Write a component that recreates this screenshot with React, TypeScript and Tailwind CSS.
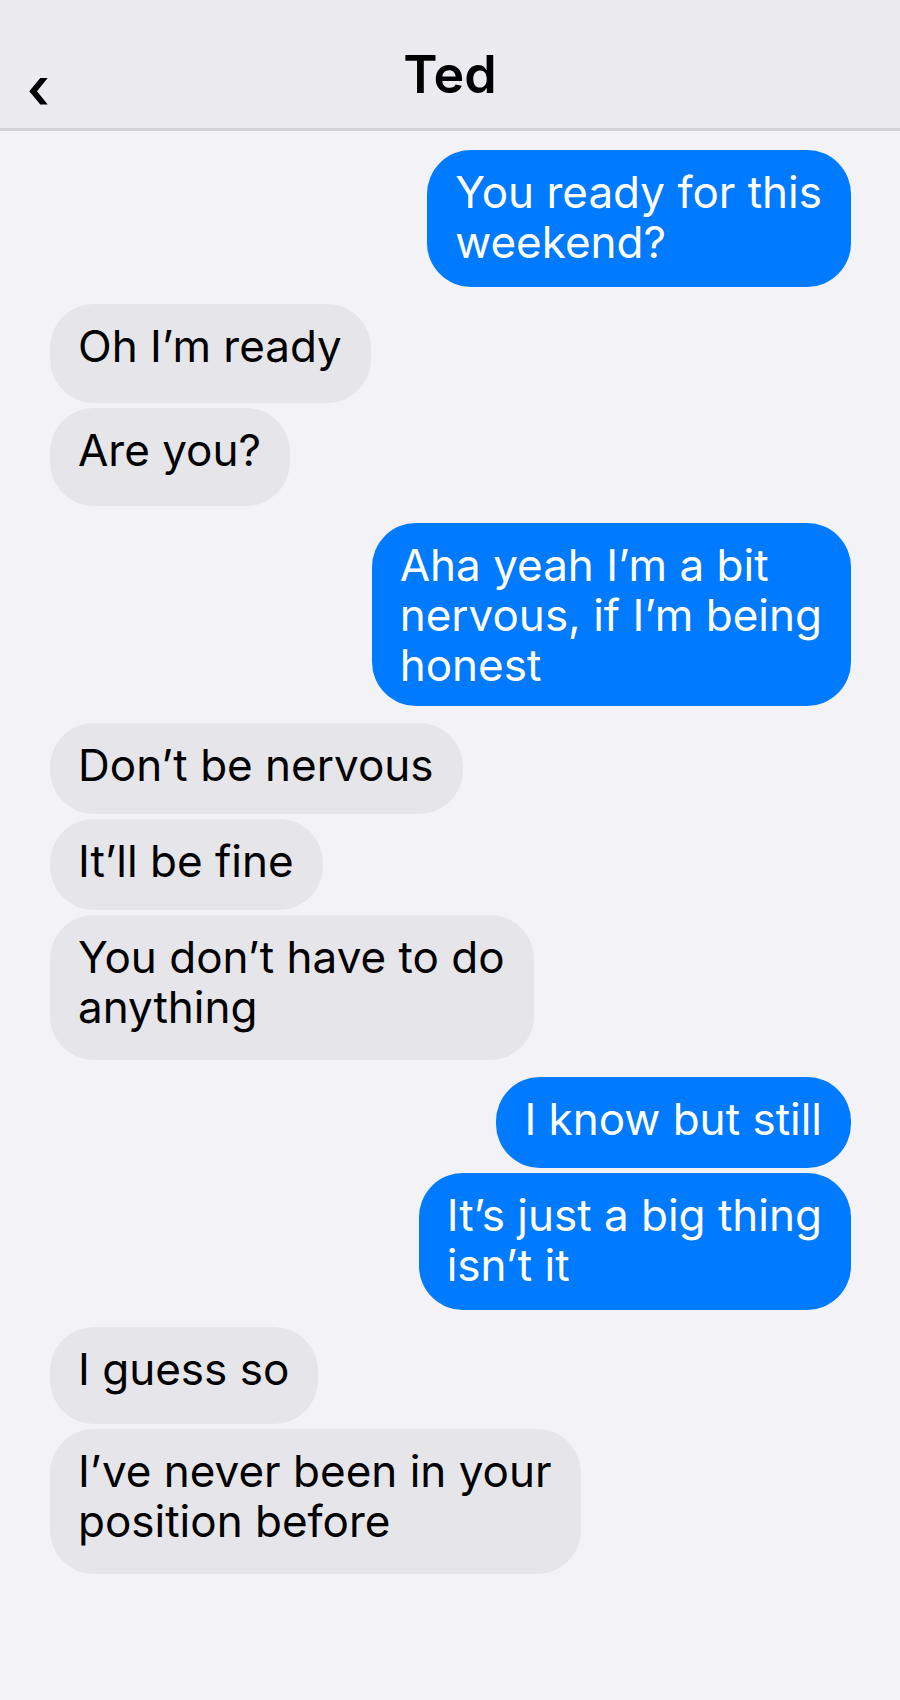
type Message = { from: 'me' | 'them'; text: string; size: string };

const groups: Message[][] = [
  [{ from: 'me', text: 'You ready for this\nweekend?', size: 'pb-5' }],
  [
    { from: 'them', text: 'Oh I’m ready', size: 'pb-8' },
    { from: 'them', text: 'Are you?', size: 'pb-[31px]' },
  ],
  [{ from: 'me', text: 'Aha yeah I’m a bit\nnervous, if I’m being\nhonest', size: 'pb-4' }],
  [
    { from: 'them', text: 'Don’t be nervous', size: 'pb-6' },
    { from: 'them', text: 'It’ll be fine', size: 'pb-6' },
    { from: 'them', text: 'You don’t have to do\nanything', size: 'pb-7' },
  ],
  [
    { from: 'me', text: 'I know but still', size: 'pb-6' },
    { from: 'me', text: 'It’s just a big thing\nisn’t it', size: 'pb-5' },
  ],
  [
    { from: 'them', text: 'I guess so', size: 'pb-[30px]' },
    { from: 'them', text: 'I’ve never been in your\nposition before', size: 'pb-7' },
  ],
];

function Bubble({ message }: { message: Message }) {
  const look =
    message.from === 'me' ? 'self-end bg-[#007aff] text-white' : 'self-start bg-[#e5e5ea] text-black';
  return (
    <li
      className={`whitespace-pre-line rounded-[44px] pt-[17px] pr-[29px] pl-7 text-[44px] leading-[50px] ${look} ${message.size}`}
    >
      {message.text}
    </li>
  );
}

export default function App() {
  return (
    <div className="flex min-h-screen flex-col bg-[#f2f2f7] font-['Inter',sans-serif]">
      <header className="grid grid-cols-[1fr_auto_1fr] items-end border-b-[3px] border-[#d1d1d6] bg-[#ebebf0] px-7 pt-[45px] pb-[23px]">
        <button type="button" aria-label="Back" className="justify-self-start">
          <svg width="20" height="28" viewBox="0 0 20 28" className="block">
            <path d="M12.3 1H19.7L9 14.3 19.7 27.5H12.3L1.3 14.3Z" fill="black" />
          </svg>
        </button>
        <h1 className="text-[52px] leading-[60px] font-semibold text-black">Ted</h1>
      </header>
      <main className="flex flex-col gap-[17px] pt-[19px] pr-[49px] pb-16 pl-[50px]">
        {groups.map((group, i) => (
          <ul key={i} className="flex flex-col gap-[5px]">
            {group.map((message) => (
              <Bubble key={message.text} message={message} />
            ))}
          </ul>
        ))}
      </main>
    </div>
  );
}
